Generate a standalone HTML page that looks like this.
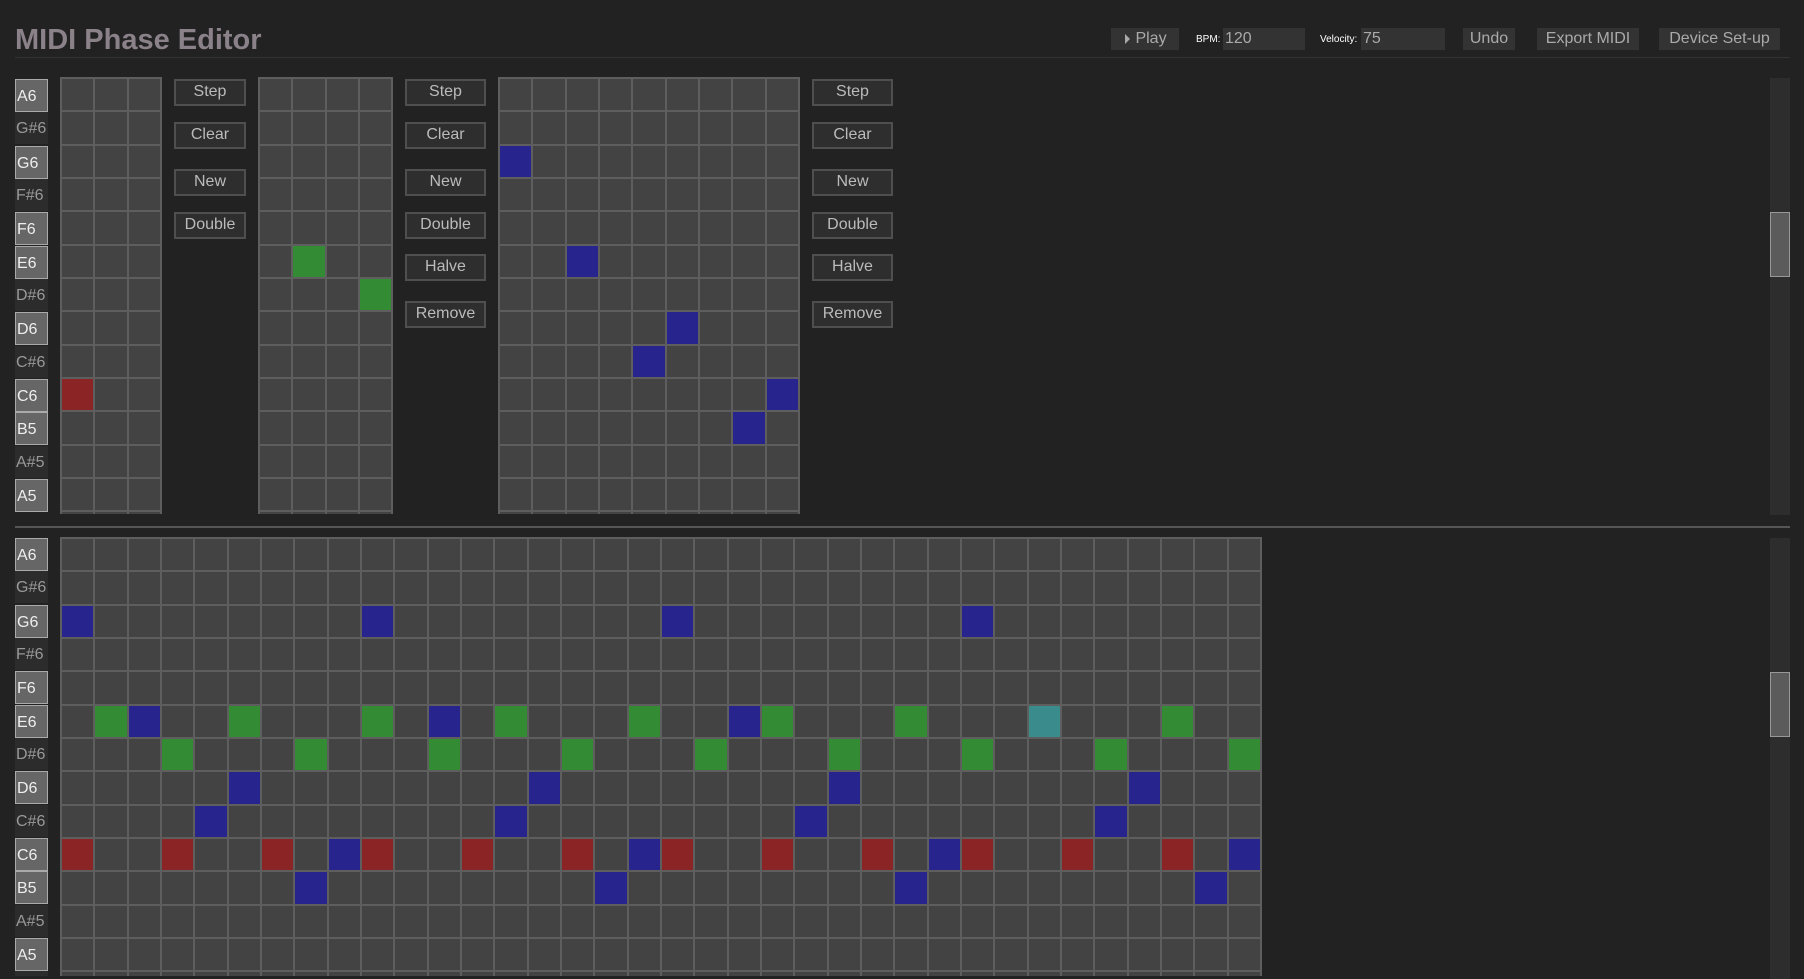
<!DOCTYPE html>
<html><head><meta charset="utf-8">
<style>
*{box-sizing:border-box;margin:0;padding:0}
html,body{width:1804px;height:979px;overflow:hidden;background:#222;font-family:"Liberation Sans",Arial,sans-serif}
.a{position:absolute}
h1{position:absolute;left:15px;top:24px;font-size:29px;font-weight:bold;color:#8a8189;letter-spacing:0px}
.hl{position:absolute;left:15px;top:57px;width:1775px;height:1px;background:#333}
.hb{position:absolute;top:28px;height:22px;background:#333;color:#aaa;font-size:16px;line-height:22px;text-align:center}
.lab{position:absolute;font-size:10px;color:#fff;top:34px}
.btn{position:absolute;background:#2e2e2e;border:2px solid #4f4f4f;color:#bbb;font-size:16px;text-align:center;line-height:22px;height:27px}
.k{position:absolute;left:15px;width:33px;height:33px;font-size:16px;line-height:33px;padding-left:1px;overflow:hidden}
.w{background:#666;border:1px solid #aaa;color:#eee}
.b{background:#2c2c2c;color:#999;border-bottom:1px solid #222}
.g{position:absolute;background:#5e5e5e;overflow:hidden}
.c{position:absolute;background:#434343}
.track{position:absolute;left:1770px;width:20px;background:#2d2d2d}
.thumb{position:absolute;left:1770px;width:20px;background:#5b5b5b;border:1px solid #999}
</style></head><body>
<h1>MIDI Phase Editor</h1>
<div class="hl"></div>
<div class="hb" style="left:1111px;width:68px;padding-left:12px">Play</div>
<div class="a" style="left:1125px;top:34px;width:0;height:0;border-left:5px solid #aaa;border-top:5px solid transparent;border-bottom:5px solid transparent"></div>
<div class="lab" style="left:1196px">BPM:</div>
<div class="hb" style="left:1223px;width:82px;text-align:left;padding-left:2px">120</div>
<div class="lab" style="left:1320px">Velocity:</div>
<div class="hb" style="left:1361px;width:84px;text-align:left;padding-left:2px">75</div>
<div class="hb" style="left:1463px;width:52px">Undo</div>
<div class="hb" style="left:1537px;width:102px">Export MIDI</div>
<div class="hb" style="left:1659px;width:121px">Device Set-up</div>

<div class="btn" style="left:174px;top:79px;width:72px">Step</div>
<div class="btn" style="left:174px;top:122px;width:72px">Clear</div>
<div class="btn" style="left:174px;top:169px;width:72px">New</div>
<div class="btn" style="left:174px;top:212px;width:72px">Double</div>

<div class="btn" style="left:405px;top:79px;width:81px">Step</div>
<div class="btn" style="left:405px;top:122px;width:81px">Clear</div>
<div class="btn" style="left:405px;top:169px;width:81px">New</div>
<div class="btn" style="left:405px;top:212px;width:81px">Double</div>
<div class="btn" style="left:405px;top:254px;width:81px">Halve</div>
<div class="btn" style="left:405px;top:301px;width:81px">Remove</div>

<div class="btn" style="left:812px;top:79px;width:81px">Step</div>
<div class="btn" style="left:812px;top:122px;width:81px">Clear</div>
<div class="btn" style="left:812px;top:169px;width:81px">New</div>
<div class="btn" style="left:812px;top:212px;width:81px">Double</div>
<div class="btn" style="left:812px;top:254px;width:81px">Halve</div>
<div class="btn" style="left:812px;top:301px;width:81px">Remove</div>

<div class="track" style="top:78px;height:437px"></div>
<div class="thumb" style="top:212px;height:65px"></div>
<div class="a" style="left:15px;top:526px;width:1775px;height:2px;background:#555"></div>
<div class="track" style="top:538px;height:441px"></div>
<div class="thumb" style="top:672px;height:65px"></div>

<div id="top" class="a" style="left:0;top:0;width:1804px;height:514px;overflow:hidden">
<div class="k w" style="top:79px">A6</div>
<div class="k b" style="top:112px">G#6</div>
<div class="k w" style="top:146px">G6</div>
<div class="k b" style="top:179px">F#6</div>
<div class="k w" style="top:212px">F6</div>
<div class="k w" style="top:246px">E6</div>
<div class="k b" style="top:279px">D#6</div>
<div class="k w" style="top:312px">D6</div>
<div class="k b" style="top:346px">C#6</div>
<div class="k w" style="top:379px">C6</div>
<div class="k w" style="top:412px">B5</div>
<div class="k b" style="top:446px">A#5</div>
<div class="k w" style="top:479px">A5</div>
</div>
<div id="bot" class="a" style="left:0;top:0;width:1804px;height:976px;overflow:hidden">
<div class="k w" style="top:538px">A6</div>
<div class="k b" style="top:571px">G#6</div>
<div class="k w" style="top:605px">G6</div>
<div class="k b" style="top:638px">F#6</div>
<div class="k w" style="top:671px">F6</div>
<div class="k w" style="top:705px">E6</div>
<div class="k b" style="top:738px">D#6</div>
<div class="k w" style="top:771px">D6</div>
<div class="k b" style="top:805px">C#6</div>
<div class="k w" style="top:838px">C6</div>
<div class="k w" style="top:871px">B5</div>
<div class="k b" style="top:905px">A#5</div>
<div class="k w" style="top:938px">A5</div>
<div class="k b" style="top:971px"></div>
</div>
<script>
var P=100/3;
var COL={b:'#27248e',g:'#338c33',r:'#8b2424',t:'#3a8c8c'};
function grid(parent,x,y,cols,rows,notes){
  var g=document.createElement('div');g.className='g';
  g.style.left=x+'px';g.style.top=y+'px';g.style.width=Math.round(cols*P+2)+'px';g.style.height=Math.round(rows*P+2)+'px';
  var h='';
  for(var r=0;r<rows;r++)for(var c=0;c<cols;c++){
    var k=notes[r+','+c];
    var l=Math.round(c*P)+2,t=Math.round(r*P)+2,w=Math.round((c+1)*P)-Math.round(c*P)-2,hh=Math.round((r+1)*P)-Math.round(r*P)-2;
    h+='<div class="c" style="left:'+l+'px;top:'+t+'px;width:'+w+'px;height:'+hh+'px'+(k?';background:'+COL[k]:'')+'"></div>';
  }
  g.innerHTML=h;parent.appendChild(g);
}
var T=document.getElementById('top'),B=document.getElementById('bot');
grid(T,60,77,3,14,{'9,0':'r'});
grid(T,258,77,4,14,{'5,1':'g','6,3':'g'});
grid(T,498,77,9,14,{'2,0':'b','5,2':'b','7,5':'b','8,4':'b','9,8':'b','10,7':'b'});
var n={};
function s(r,cs,k){cs.forEach(function(c){n[r+','+c]=k});}
s(2,[0,9,18,27],'b');
s(5,[1,5,9,13,17,21,25,33],'g');s(5,[2,11,20],'b');s(5,[29],'t');
s(6,[3,7,11,15,19,23,27,31,35],'g');
s(7,[5,14,23,32],'b');
s(8,[4,13,22,31],'b');
s(9,[0,3,6,9,12,15,18,21,24,27,30,33],'r');s(9,[8,17,26,35],'b');
s(10,[7,16,25,34],'b');
grid(B,60,537,36,14,n);
</script>
</body></html>
